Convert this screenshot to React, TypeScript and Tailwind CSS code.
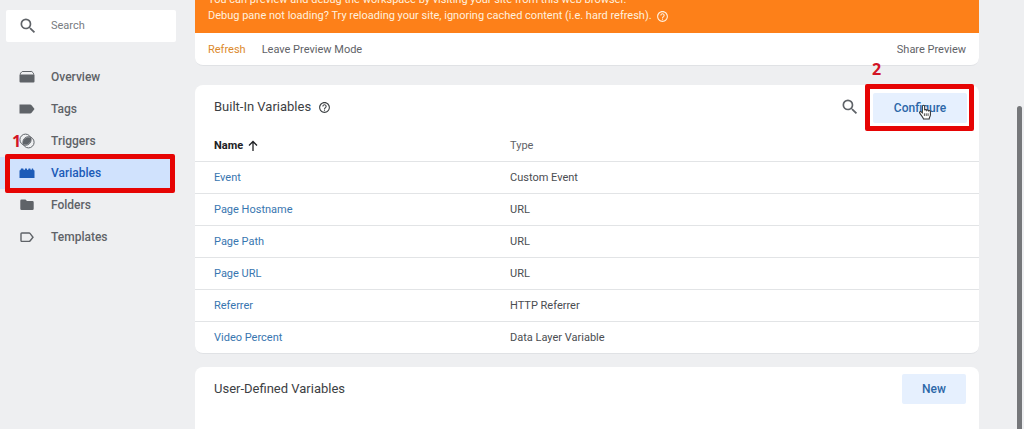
import React, { useState } from 'react';

interface NavItem {
  label: string;
  icon: React.ReactNode;
}

interface Variable {
  name: string;
  type: string;
}

const navItems: NavItem[] = [
  {
    label: 'Overview',
    icon: (
      <>
        <path d="M1.500 5.500V4.200L3.200 2.500h9.600l1.700 1.700v1.300" fill="none" stroke="currentColor" strokeWidth="1" />
        <path d="M.5 5.500h15V12.500a1 1 0 0 1-1 1h-13a1 1 0 0 1-1-1z" />
      </>
    ),
  },
  {
    label: 'Tags',
    icon: <path d="M.5 3.500h10.500c.8 0 1.300.3 1.800.9L15.500 8l-2.700 3.600c-.5.6-1 .9-1.800.9H.5z" />,
  },
  {
    label: 'Triggers',
    icon: (
      <>
        <circle cx="6.500" cy="6.700" r="5.600" fill="none" stroke="currentColor" />
        <circle cx="9.500" cy="9.300" r="5.600" fill="none" stroke="currentColor" />
        <path d="M12 5A5.600 5.600 0 0 0 4 11A5.600 5.600 0 0 0 12 5z" />
      </>
    ),
  },
  {
    label: 'Variables',
    icon: <path d="M.5 5.500 1.500 5 2 3.500h2.200l.6 1.500h.8l.5-1.500h1.700l.5 1.500h.8l.5-1.500h1.700l.5 1.500h.6l.5-1.500H14l.5 1.500 1 .5V13H.5z" />,
  },
  {
    label: 'Folders',
    icon: <path d="M2.500 2.500h4L8 4h5.500a1.200 1.200 0 0 1 1.200 1.200v6.600a1.200 1.200 0 0 1-1.200 1.200h-11a1.200 1.200 0 0 1-1.200-1.200V3.700a1.200 1.200 0 0 1 1.200-1.200z" />,
  },
  {
    label: 'Templates',
    icon: (
      <path
        d="M2.800 4h7.200c.5 0 .9.2 1.200.6L14 8.200l-2.800 3.600c-.3.4-.7.6-1.200.6H2.800a.8.8 0 0 1-.8-.8V4.800a.8.8 0 0 1 .8-.8z"
        fill="none"
        stroke="currentColor"
        strokeWidth="1.400"
      />
    ),
  },
];

const variables: Variable[] = [
  { name: 'Event', type: 'Custom Event' },
  { name: 'Page Hostname', type: 'URL' },
  { name: 'Page Path', type: 'URL' },
  { name: 'Page URL', type: 'URL' },
  { name: 'Referrer', type: 'HTTP Referrer' },
  { name: 'Video Percent', type: 'Data Layer Variable' },
];

const SearchIcon = () => (
  <svg viewBox="0 0 24 24" className="w-5 h-5 shrink-0" fill="currentColor" aria-hidden="true">
    <path d="M15.500 14h-.79l-.28-.27A6.471 6.471 0 0 0 16 9.500 6.500 6.500 0 1 0 9.500 16c1.610 0 3.090-.59 4.230-1.570l.27.28v.79l5 4.990L20.490 19l-4.990-5zm-6 0C7.010 14 5 11.990 5 9.500S7.010 5 9.500 5 14 7.010 14 9.500 11.990 14 9.500 14z" />
  </svg>
);

const HelpIcon = () => (
  <svg viewBox="0 0 24 24" className="w-[13px] h-[13px] shrink-0" fill="currentColor" aria-hidden="true">
    <path d="M11 18h2v-2h-2v2zm1-16C6.480 2 2 6.480 2 12s4.480 10 10 10 10-4.480 10-10S17.520 2 12 2zm0 18c-4.410 0-8-3.590-8-8s3.590-8 8-8 8 3.590 8 8-3.590 8-8 8zm0-14c-2.210 0-4 1.790-4 4h2c0-1.100.9-2 2-2s2 .9 2 2c0 2-3 1.750-3 5h2c0-2.250 3-2.500 3-5 0-2.210-1.790-4-4-4z" />
  </svg>
);

const HandCursor = () => (
  <svg viewBox="0 0 16 18" className="absolute left-[45px] top-[11px] w-[14px] h-4" aria-hidden="true">
    <path
      d="M5 10V2.500a1.300 1.300 0 0 1 2.600 0V7c.3-1 2.200-.9 2.400.2.500-.8 2-.5 2.200.5.600-.6 2-.3 2 1V12c0 2-1.200 2.800-1.400 5H6.300C6 15 4 13.500 2 10.300c-.8-1.400.8-2.300 1.700-1.400z"
      fill="#fff"
      stroke="#333"
      strokeWidth="1.200"
    />
    <path d="M7.300 10.500v3M9.400 10.500v3M11.500 10.500v3" stroke="#333" />
  </svg>
);

const Highlight: React.FC<{ className: string }> = ({ className }) => (
  <span className={`absolute z-10 border-[5px] border-[#e60404] rounded-xs pointer-events-none ${className}`} />
);

const Sidebar = () => {
  const [active, setActive] = useState('Variables');

  return (
    <aside className="w-[195px] shrink-0 pt-[10px]">
      <label className="flex items-center h-8 ml-[6px] mr-[19px] pl-3 gap-[13px] bg-white rounded-xs text-[#5f6368]">
        <SearchIcon />
        <input
          type="text"
          placeholder="Search"
          aria-label="Search"
          className="w-full min-w-0 bg-transparent text-[11px] text-[#5f6368] placeholder:text-[#777b7f] outline-none"
        />
      </label>
      <nav className="mt-[19px]">
        {navItems.map((item) => (
          <div key={item.label} className="relative">
            <button
              onClick={() => setActive(item.label)}
              className={`flex items-center gap-4 w-[174px] h-8 pl-[19px] text-[12px] font-medium ${
                active === item.label ? 'bg-[#d0e2fd] text-[#1c5bb8]' : 'text-[#5f6368]'
              }`}
            >
              <svg viewBox="0 0 16 16" className="w-4 h-4" fill="currentColor" aria-hidden="true">
                {item.icon}
              </svg>
              {item.label}
            </button>
            {item.label === 'Triggers' && (
              <span className="absolute left-3 top-1 z-10 font-['Open_Sans',sans-serif] text-[16px] leading-6 font-bold text-[#d31425]">
                1
              </span>
            )}
            {item.label === 'Variables' && <Highlight className="left-[5px] -top-[3px] w-[170px] h-[39px]" />}
          </div>
        ))}
      </nav>
    </aside>
  );
};

const PreviewBanner = () => (
  <section className="-mt-8 shrink-0 bg-white rounded-lg overflow-hidden border-b border-[#e0e2e5]">
    <div className="h-[65px] pl-[13px] pb-[9px] flex flex-col justify-end bg-[#fd8019] text-[#fff0df] text-[11px] leading-4">
      <p>You can preview and debug the workspace by visiting your site from this web browser.</p>
      <p className="flex items-center gap-1">
        Debug pane not loading? Try reloading your site, ignoring cached content (i.e. hard refresh).
        <HelpIcon />
      </p>
    </div>
    <div className="flex items-center h-8 pt-[2px] px-[13px] gap-4 text-[11px] text-[#5f6368]">
      <button className="text-[#dc8a2c]">Refresh</button>
      <button>Leave Preview Mode</button>
      <button className="ml-auto">Share Preview</button>
    </div>
  </section>
);

const BuiltInVariables = () => (
  <section className="shrink-0 bg-white rounded-lg border-b border-[#e0e2e5]">
    <header className="flex items-center h-11 pl-[19px] pr-3">
      <h2 className="text-[13px] text-[#3c4043]">Built-In Variables</h2>
      <button aria-label="Help" className="ml-[7px] text-[#3c4043]">
        <HelpIcon />
      </button>
      <button aria-label="Search variables" className="ml-auto mr-[13px] text-[#5f6368]">
        <SearchIcon />
      </button>
      <div className="relative mt-[2px]">
        <button className="h-[30px] w-[94px] rounded-xs bg-[#e6f0fe] text-[#2c67a8] text-[12px] font-medium">
          Configure
        </button>
        <HandCursor />
        <Highlight className="-left-2 -top-[9px] w-[109px] h-[47px]" />
        <span className="absolute -left-px -top-9 font-['Open_Sans',sans-serif] text-[16px] leading-6 font-bold text-[#d31425]">
          2
        </span>
      </div>
    </header>
    <table className="w-full table-fixed text-left text-[11px]">
      <thead>
        <tr className="h-8">
          <th className="w-[315px] pl-[19px] pt-[2px] font-bold text-[#202124]">
            <button className="flex items-center gap-1">
              Name
              <svg viewBox="0 0 12 12" className="w-3 h-3" fill="none" stroke="currentColor" strokeWidth="1.300" aria-hidden="true">
                <path d="M6 11V1.500M2 5.500l4-4 4 4" />
              </svg>
            </button>
          </th>
          <th className="pt-[2px] font-normal text-[#5f6368]">Type</th>
        </tr>
      </thead>
      <tbody>
        {variables.map((variable) => (
          <tr key={variable.name} className="h-8 border-t border-[#e2e4e6]">
            <td className="pl-[19px] pt-[2px]">
              <a href="#" className="text-[#3876b0]">{variable.name}</a>
            </td>
            <td className="pt-[2px] text-[#4a4d51]">{variable.type}</td>
          </tr>
        ))}
      </tbody>
    </table>
  </section>
);

const UserDefinedVariables = () => (
  <section className="grow bg-white rounded-t-lg">
    <header className="flex items-center justify-between h-11 pl-[19px] pr-[13px]">
      <h2 className="text-[13px] text-[#3c4043]">User-Defined Variables</h2>
      <button className="h-[30px] w-16 rounded-xs bg-[#e6f0fe] text-[#2c67a8] text-[12px] font-medium">New</button>
    </header>
  </section>
);

export default function App() {
  return (
    <div className="flex h-screen overflow-hidden bg-[#eeeff1] font-[Roboto,sans-serif]">
      <Sidebar />
      <main className="flex flex-col grow min-w-0">
        <PreviewBanner />
        <div className="h-[19px] shrink-0" />
        <BuiltInVariables />
        <div className="h-[13px] shrink-0" />
        <UserDefinedVariables />
      </main>
      <div className="flex justify-end w-[45px] shrink-0 pt-[106px] pr-[2px]">
        <div className="w-[5px] rounded-t-full bg-[#75777a]" />
      </div>
    </div>
  );
}
